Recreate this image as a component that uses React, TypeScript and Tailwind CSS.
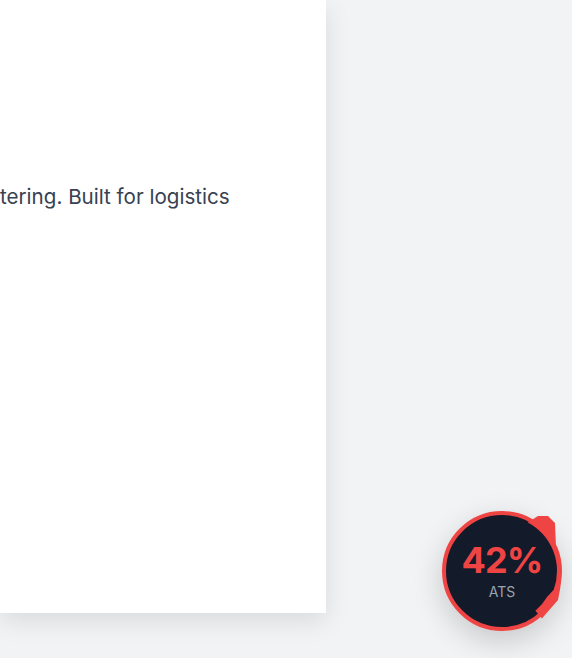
export default function App() {
  return (
    <div className="relative w-[572px] h-[658px] overflow-hidden bg-[#f2f3f5] font-['Inter',sans-serif]">
      {/* Resume page */}
      <div className="w-[326px] h-[613px] bg-white shadow-[0_8px_24px_rgba(0,0,0,0.10)] pt-[183px]">
        <p className="text-[20.6px] leading-7 text-[#374151] whitespace-nowrap">
          tering. Built for logistics
        </p>
      </div>

      {/* ATS score badge */}
      <div className="absolute left-[437px] top-[506px] w-[130px] h-[130px] rounded-full">
        <div className="absolute left-[5px] top-[5px] w-[120px] h-[120px] rounded-full shadow-[0_10px_30px_rgba(0,0,0,0.18)]" />
        <svg width="130" height="130" viewBox="0 0 130 130" className="absolute inset-0">
          <circle cx="65" cy="65" r="58" fill="#131a2a" stroke="#ef4444" strokeWidth="4" />
          <path
            d="M90.8 16.4 L101 10 L111 10 L118 17 L119 42 Q128 65 121 94 L104.9 112.5 L98.4 104.8 A52 52 0 0 0 110 91 L116.7 83.8 A55 55 0 0 0 90.8 16.4 Z"
            fill="#ef4444"
          />
        </svg>
        <div className="absolute inset-0 flex flex-col items-center justify-center">
          <span className="text-[36px] leading-none font-bold text-[#ef4444] tracking-tight">42%</span>
          <span className="text-[14px] leading-none text-[#9ca3af] mt-[7px] mb-[2px]">ATS</span>
        </div>
      </div>
    </div>
  )
}
